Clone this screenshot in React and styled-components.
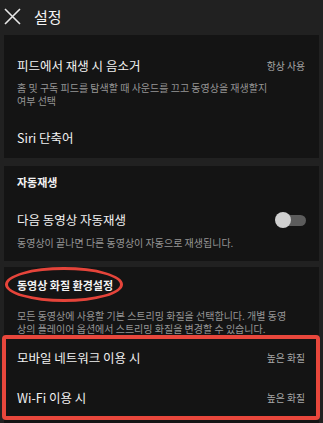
import React from 'react';
import styled, { createGlobalStyle } from 'styled-components';

const GlobalStyle = createGlobalStyle`
  html, body {
    margin: 0;
    padding: 0;
    background: #212121;
  }
  body {
    font-family: 'Noto Sans CJK KR', 'Noto Sans', sans-serif;
    color: #f1f1f1;
    -webkit-font-smoothing: antialiased;
  }
`;

// Layout
const Page = styled.div`
  width: 323px;
  height: 423px;
  overflow: hidden;
  background: #212121;
  padding: 0 4px;
  box-sizing: border-box;
`;

const Header = styled.div`
  display: flex;
  align-items: center;
  height: 33px;
  gap: 13px;
  margin: 0 -4px;
  padding: 0 0 0 4px;
`;

const Title = styled.div`
  font-size: 15px;
  line-height: 20px;
  color: #f4f4f4;
  margin-top: 1px;
`;

const Card = styled.div`
  position: relative;
  background: #141414;
  padding: ${(p) => p.$pad || '0'};
  padding-left: 13px;
  padding-right: 14px;
  margin-top: ${(p) => p.$gap || 0}px;
`;

const SectionHeader = styled.div`
  font-size: 11px;
  line-height: 14px;
  font-weight: 700;
  color: #f2f2f2;
`;

const Item = styled.div`
  margin-top: ${(p) => p.$mt || 0}px;
`;

const Row = styled.div`
  display: flex;
  align-items: center;
  justify-content: space-between;
  height: ${(p) => (p.$h ? p.$h + 'px' : 'auto')};
`;

const Label = styled.div`
  font-size: 12.5px;
  line-height: 18px;
  color: #f1f1f1;
`;

const Value = styled.div`
  font-size: 9.8px;
  line-height: 14px;
  color: #a8a8a8;
`;

const Desc = styled.div`
  font-size: 10px;
  line-height: 13px;
  color: #969696;
  margin-top: ${(p) => p.$mt || 0}px;
  padding-right: ${(p) => p.$pr || 0}px;
`;

const Toggle = styled.div`
  position: relative;
  width: 31px;
  height: 16px;
  margin-right: -1px;
  &::before {
    content: '';
    position: absolute;
    left: 4px;
    right: 0;
    top: 3px;
    height: 11px;
    border-radius: 6px;
    background: #5c5c5c;
  }
  &::after {
    content: '';
    position: absolute;
    left: 0;
    top: 0;
    width: 16px;
    height: 16px;
    border-radius: 50%;
    background: #d0d0d0;
  }
`;

const RowsGroup = styled.div`
  position: relative;
  margin: 3px -14px 0 -13px;
  padding: 0 14px 0 13px;
`;

// Red annotations drawn over the screenshot
const Ellipse = styled.div`
  position: absolute;
  left: 1px;
  top: 0;
  width: 118px;
  height: 35px;
  border: 3.5px solid #e5443a;
  border-radius: 50%;
  box-sizing: border-box;
  pointer-events: none;
`;

const Highlight = styled.div`
  position: absolute;
  top: -3px;
  bottom: -2px;
  left: -2px;
  right: -1px;
  border: 4px solid #e8473c;
  border-radius: 4px;
  pointer-events: none;
`;

const CloseIcon = () => (
  <svg width="17" height="17" viewBox="0 0 17 17">
    <path d="M1 1 L16 16 M16 1 L1 16" stroke="#e6e6e6" strokeWidth="1.6" fill="none" />
  </svg>
);

export default function App() {
  return (
    <>
      <GlobalStyle />
      <Page>
        <Header>
          <CloseIcon />
          <Title>설정</Title>
        </Header>

        <Card $gap={2} $pad="22px 0 11px">
          <Item>
            <Row>
              <Label>피드에서 재생 시 음소거</Label>
              <Value>항상 사용</Value>
            </Row>
            <Desc $mt={6} $pr={30}>
              홈 및 구독 피드를 탐색할 때 사운드를 끄고 동영상을 재생할지 여부 선택
            </Desc>
          </Item>
          <Item $mt={22}>
            <Label>Siri 단축어</Label>
          </Item>
        </Card>

        <Card $gap={8} $pad="9px 0 12px">
          <SectionHeader>자동재생</SectionHeader>
          <Item $mt={22}>
            <Row>
              <Label>다음 동영상 자동재생</Label>
              <Toggle />
            </Row>
            <Desc $mt={7}>동영상이 끝나면 다른 동영상이 자동으로 재생됩니다.</Desc>
          </Item>
        </Card>

        <Card $gap={6} $pad="11px 0 10px">
          <Ellipse />
          <SectionHeader>동영상 화질 환경설정</SectionHeader>
          <Desc $mt={17} $pr={10}>
            모든 동영상에 사용할 기본 스트리밍 화질을 선택합니다. 개별 동영상의 플레이어 옵션에서 스트리밍 화질을 변경할 수 있습니다.
          </Desc>
          <RowsGroup>
            <Highlight />
            <Row $h={40}>
              <Label>모바일 네트워크 이용 시</Label>
              <Value>높은 화질</Value>
            </Row>
            <Row $h={40}>
              <Label>Wi-Fi 이용 시</Label>
              <Value>높은 화질</Value>
            </Row>
          </RowsGroup>
        </Card>
      </Page>
    </>
  );
}
